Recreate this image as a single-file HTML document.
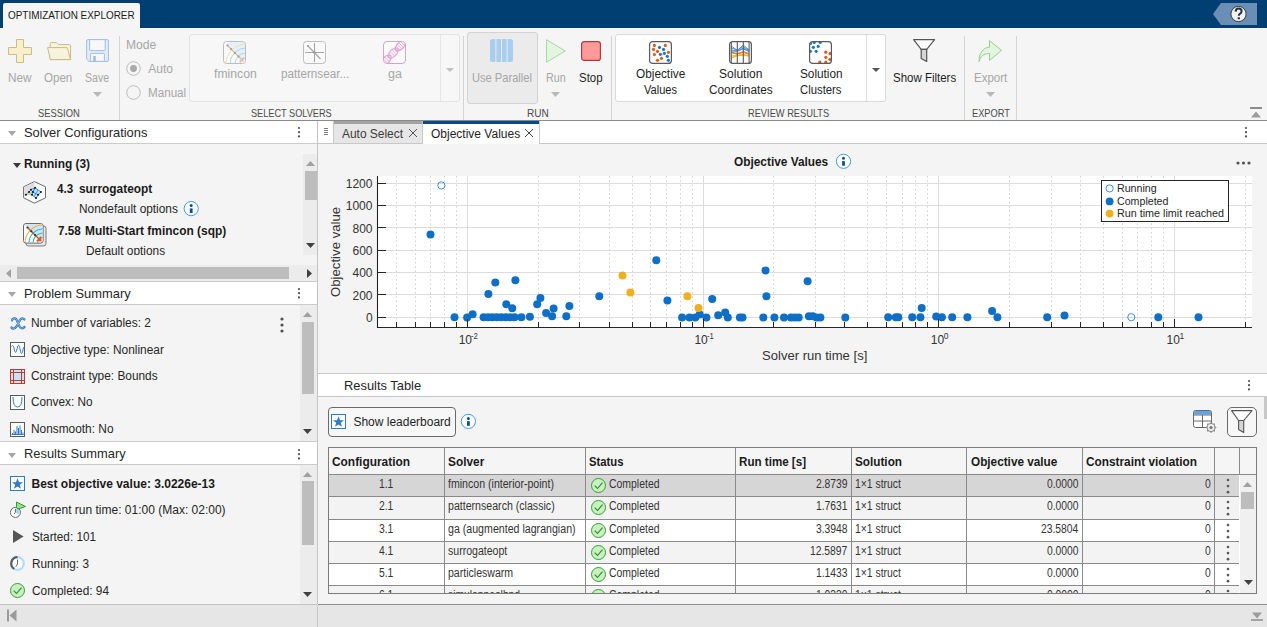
<!DOCTYPE html><html><head><meta charset="utf-8"><style>
*{box-sizing:border-box;margin:0;padding:0}
html,body{width:1267px;height:627px;overflow:hidden;background:#f4f4f4;font-family:"Liberation Sans",sans-serif;color:#212121}
.a{position:absolute}
.t{position:absolute;white-space:nowrap;line-height:1;transform-origin:0 0}
svg{position:absolute;overflow:visible}
</style></head><body><div class="a" style="left:0px;top:0px;width:1267px;height:28px;background:#013f73"></div>
<div class="a" style="left:3px;top:3px;width:137px;height:25px;background:#f5f5f5;border-radius:2px 2px 0 0"></div>
<div class="t" style="left:8.20px;top:9.59px;font-size:11px;color:#1a1a1a;transform:scaleX(0.9019);">OPTIMIZATION EXPLORER</div>
<svg style="left:1213px;top:3px" width="44" height="22" viewBox="0 0 44 22"><path d="M8 0H44V22H8L0 11Z" fill="#6a8eb4"/><circle cx="25.5" cy="11" r="7.6" fill="#f2f2f2" stroke="#24323f" stroke-width="0.9"/><path d="M22.6 8.6 Q22.8 5.6 25.6 5.6 Q28.6 5.6 28.6 8.2 Q28.6 9.8 26.8 10.8 Q25.8 11.4 25.8 12.8" fill="none" stroke="#24323f" stroke-width="2"/><rect x="24.7" y="14.3" width="2.2" height="2" fill="#24323f"/></svg>
<div class="a" style="left:0px;top:28px;width:1267px;height:92px;background:#f5f5f5"></div>
<div class="a" style="left:0px;top:120px;width:1267px;height:1px;background:#8a8a8a"></div>
<div class="a" style="left:119px;top:36px;width:1px;height:84px;background:#d4d4d4"></div>
<div class="a" style="left:463px;top:36px;width:1px;height:84px;background:#d4d4d4"></div>
<div class="a" style="left:611px;top:36px;width:1px;height:84px;background:#d4d4d4"></div>
<div class="a" style="left:964px;top:36px;width:1px;height:84px;background:#d4d4d4"></div>
<div class="a" style="left:1016px;top:36px;width:1px;height:84px;background:#d4d4d4"></div>
<svg style="left:8px;top:39px" width="24" height="24" viewBox="0 0 24 24"><path d="M8.5 0.5h7v8h8v7h-8v8h-7v-8h-8v-7h8z" fill="#f8efcb" stroke="#cdbb8c" stroke-width="1" stroke-linejoin="round"/></svg>
<svg style="left:47px;top:42px" width="25" height="19" viewBox="0 0 25 19"><path d="M3.2 17.6V1.6Q3.2 0.6 4.2 0.6H9.5L11.5 2.6H22.5Q23.6 2.6 23.6 3.6V17.6Z" fill="#f8f4dc" stroke="#c9b98f" stroke-width="1" stroke-linejoin="round"/><path d="M0.6 5.6H20.2L23.6 17.6H3.4Z" fill="#f8f4dc" stroke="#c9b98f" stroke-width="1" stroke-linejoin="round"/></svg>
<svg style="left:86px;top:39px" width="23" height="23" viewBox="0 0 23 23"><path d="M0.6 2Q0.6 0.6 2 0.6H21Q22.4 0.6 22.4 2V21Q22.4 22.4 21 22.4H3L0.6 20Z" fill="#e1edfa" stroke="#9fbde3"/><rect x="3.6" y="0.6" width="15.6" height="11" rx="1" fill="#f7f7f7" stroke="#9fbde3"/><rect x="4.6" y="14.4" width="13.8" height="8" rx="0.8" fill="#f7f7f7" stroke="#9fbde3"/><rect x="7.2" y="17" width="2.6" height="5.6" fill="#9fbde3"/></svg>
<div class="t" style="left:8.30px;top:71.84px;font-size:12px;color:#a6a6a6;transform:scaleX(0.9782);">New</div>
<div class="t" style="left:44.30px;top:71.84px;font-size:12px;color:#a6a6a6;transform:scaleX(0.9634);">Open</div>
<div class="t" style="left:85.30px;top:71.84px;font-size:12px;color:#a6a6a6;transform:scaleX(0.8804);">Save</div>
<svg style="left:93px;top:92px" width="9" height="5" viewBox="0 0 9 5"><path d="M0 0h9L4.5 5z" fill="#b8b8b8"/></svg>
<div class="t" style="left:38.30px;top:107.69px;font-size:11px;color:#4a4a4a;transform:scaleX(0.8532);">SESSION</div>
<div class="t" style="left:126.40px;top:38.84px;font-size:12px;color:#a6a6a6;transform:scaleX(1.0067);">Mode</div>
<svg style="left:126px;top:61px" width="15" height="15" viewBox="0 0 15 15"><circle cx="7.5" cy="7.5" r="6.8" fill="#f5f5f5" stroke="#bcbcbc"/><circle cx="7.5" cy="7.5" r="3.4" fill="#a9a9a9"/></svg>
<div class="t" style="left:148.30px;top:63.04px;font-size:12px;color:#a6a6a6;">Auto</div>
<svg style="left:126px;top:85px" width="15" height="15" viewBox="0 0 15 15"><circle cx="7.5" cy="7.5" r="6.8" fill="#f5f5f5" stroke="#bcbcbc"/></svg>
<div class="t" style="left:148.30px;top:86.54px;font-size:12px;color:#a6a6a6;transform:scaleX(0.9702);">Manual</div>
<div class="a" style="left:189px;top:34px;width:271px;height:68px;background:#f7f7f7;border:1px solid #e2e2e2;border-radius:3px"></div>
<div class="a" style="left:440px;top:35px;width:1px;height:66px;background:#e6e6e6"></div>
<svg style="left:446px;top:68px" width="8" height="4" viewBox="0 0 8 4"><path d="M0 0h8L4.0 4z" fill="#c0c0c0"/></svg>
<svg style="left:223px;top:41px" width="23" height="23" viewBox="0 0 23 23"><defs><clipPath id="cf1"><rect x="1" y="1" width="21" height="21" rx="2.5"/></clipPath></defs><rect x="0.5" y="0.5" width="22" height="22" rx="3" fill="#fafafa" stroke="#bdbdbd"/><g clip-path="url(#cf1)"><path d="M23 23L3 3A21 21 0 0 1 23 3Z" fill="#e6f0fa"/><circle cx="23" cy="23" r="20" fill="none" stroke="#f5dca8" stroke-width="1"/><circle cx="23" cy="23" r="16" fill="none" stroke="#9fd8e8" stroke-width="1"/><circle cx="23" cy="23" r="11" fill="none" stroke="#a8e0c4" stroke-width="1"/><circle cx="23" cy="23" r="6" fill="none" stroke="#a9c8f0" stroke-width="1"/></g><path d="M4.5 4.5L19 19" stroke="#eab79e" stroke-width="1.3"/><path d="M16 20.5L20.5 20.5 20.5 16z" fill="#eab79e"/><circle cx="4.5" cy="4.5" r="1" fill="#9a9a9a"/><circle cx="8" cy="8" r="1" fill="#9a9a9a"/><circle cx="12" cy="12" r="1" fill="#9a9a9a"/><circle cx="15.5" cy="15.5" r="1" fill="#9a9a9a"/></svg>
<div class="t" style="left:213.70px;top:68.24px;font-size:12px;color:#a6a6a6;transform:scaleX(1.0190);">fmincon</div>
<svg style="left:303px;top:41px" width="23" height="23" viewBox="0 0 23 23"><rect x="0.5" y="0.5" width="22" height="22" rx="3" fill="#fafafa" stroke="#bdbdbd"/><path d="M11.5 2V21M2 11.5H21M5 5L17.5 18" stroke="#a6a6a6" stroke-width="1.1"/><circle cx="5" cy="5" r="1.1" fill="#9a9a9a"/><circle cx="11.5" cy="11.5" r="1.3" fill="#9a9a9a"/></svg>
<div class="t" style="left:280.60px;top:68.24px;font-size:12px;color:#a6a6a6;transform:scaleX(0.9729);">patternsear...</div>
<svg style="left:383px;top:41px" width="23" height="23" viewBox="0 0 23 23"><defs><clipPath id="cg1"><rect x="1" y="1" width="21" height="21" rx="3"/></clipPath></defs><rect x="0.5" y="0.5" width="22" height="22" rx="3.5" fill="#fafafa" stroke="#d9a3cb"/><g clip-path="url(#cg1)" fill="none" stroke="#e8a0d4"><ellipse cx="17.3" cy="4.9" rx="6" ry="3.4" transform="rotate(-45 17.3 4.9)" stroke-width="1.3"/><path d="M13.13 5.39L16.81 9.07" stroke-width="0.8"/><path d="M14.68 3.84L18.36 7.52" stroke-width="0.8"/><path d="M16.24 2.28L19.92 5.96" stroke-width="0.8"/><path d="M17.79 0.73L21.47 4.41" stroke-width="0.8"/><ellipse cx="10.2" cy="12" rx="6" ry="3.4" transform="rotate(-45 10.2 12)" stroke-width="1.3"/><path d="M6.03 12.49L9.71 16.17" stroke-width="0.8"/><path d="M7.58 10.94L11.26 14.62" stroke-width="0.8"/><path d="M9.14 9.38L12.82 13.06" stroke-width="0.8"/><path d="M10.69 7.83L14.37 11.51" stroke-width="0.8"/><ellipse cx="3.1" cy="19.1" rx="6" ry="3.4" transform="rotate(-45 3.1 19.1)" stroke-width="1.3"/><path d="M-1.07 19.59L2.61 23.27" stroke-width="0.8"/><path d="M0.48 18.04L4.16 21.72" stroke-width="0.8"/><path d="M2.04 16.48L5.72 20.16" stroke-width="0.8"/><path d="M3.59 14.93L7.27 18.61" stroke-width="0.8"/></g></svg>
<div class="t" style="left:387.50px;top:68.24px;font-size:12px;color:#a6a6a6;transform:scaleX(1.0467);">ga</div>
<div class="t" style="left:251.00px;top:107.69px;font-size:11px;color:#4a4a4a;transform:scaleX(0.8331);">SELECT SOLVERS</div>
<div class="a" style="left:467px;top:32px;width:71px;height:72px;background:#ebebeb;border:1px solid #d3d3d3;border-radius:3px"></div>
<svg style="left:490px;top:39px" width="23" height="23" viewBox="0 0 23 23"><rect x="0" y="0" width="23" height="23" rx="2.5" fill="#a9cdee"/><path d="M5.9 0V23M11.5 0V23M17.1 0V23" stroke="#ebebeb" stroke-width="1"/></svg>
<div class="t" style="left:472.30px;top:71.64px;font-size:12px;color:#a6a6a6;transform:scaleX(0.9266);">Use Parallel</div>
<svg style="left:546px;top:39px" width="20" height="24" viewBox="0 0 20 24"><path d="M0.5 0.8L19.3 12 0.5 23.2z" fill="#e3f5de" stroke="#a8d9a0"/></svg>
<div class="t" style="left:545.50px;top:71.64px;font-size:12px;color:#a6a6a6;transform:scaleX(0.9000);">Run</div>
<svg style="left:551px;top:92px" width="9" height="5" viewBox="0 0 9 5"><path d="M0 0h9L4.5 5z" fill="#b8b8b8"/></svg>
<svg style="left:581px;top:41px" width="20" height="20" viewBox="0 0 20 20"><rect x="0.6" y="0.6" width="18.8" height="18.8" rx="2.5" fill="#ff9a9a" stroke="#b23a3a" stroke-width="1.2"/></svg>
<div class="t" style="left:579.20px;top:71.64px;font-size:12px;color:#1e1e1e;transform:scaleX(0.9543);">Stop</div>
<div class="t" style="left:526.50px;top:107.69px;font-size:11px;color:#4a4a4a;transform:scaleX(0.9131);">RUN</div>
<div class="a" style="left:615px;top:34px;width:271px;height:68px;background:#fff;border:1px solid #d9d9d9;border-radius:3px"></div>
<div class="a" style="left:866px;top:35px;width:1px;height:66px;background:#dcdcdc"></div>
<svg style="left:872px;top:68px" width="8" height="4" viewBox="0 0 8 4"><path d="M0 0h8L4.0 4z" fill="#555"/></svg>
<svg style="left:649px;top:41px" width="23" height="23" viewBox="0 0 23 23"><defs><clipPath id="cd649"><rect x="1" y="1" width="21" height="21" rx="2.5"/></clipPath></defs><rect x="0.5" y="0.5" width="22" height="22" rx="3" fill="#fff"/><g clip-path="url(#cd649)"><circle cx="5.4" cy="4.4" r="1.6" fill="#e15a1d"/><circle cx="16.3" cy="4.4" r="1.6" fill="#e15a1d"/><circle cx="4.5" cy="8.4" r="1.6" fill="#e15a1d"/><circle cx="8.5" cy="10.4" r="1.6" fill="#e15a1d"/><circle cx="5.4" cy="13.5" r="1.6" fill="#e15a1d"/><circle cx="19.4" cy="11.3" r="1.6" fill="#e15a1d"/><circle cx="12.5" cy="17.3" r="1.6" fill="#e15a1d"/><circle cx="8.5" cy="19.3" r="1.6" fill="#e15a1d"/><circle cx="10.5" cy="6.4" r="1.6" fill="#1f77c7"/><circle cx="14.5" cy="8.4" r="1.6" fill="#1f77c7"/><circle cx="11.4" cy="13.3" r="1.6" fill="#1f77c7"/><circle cx="15.4" cy="12.4" r="1.6" fill="#1f77c7"/><circle cx="18.3" cy="15.3" r="1.6" fill="#1f77c7"/><circle cx="19.4" cy="19.3" r="1.6" fill="#1f77c7"/></g><rect x="0.6" y="0.6" width="21.8" height="21.8" rx="3" fill="none" stroke="#5a5a5a" stroke-width="1.2"/></svg>
<div class="t" style="left:636.30px;top:67.64px;font-size:12px;color:#1e1e1e;transform:scaleX(0.9840);">Objective</div>
<div class="t" style="left:644.30px;top:83.64px;font-size:12px;color:#1e1e1e;transform:scaleX(0.9231);">Values</div>
<svg style="left:729px;top:41px" width="23" height="23" viewBox="0 0 23 23"><rect x="0.5" y="0.5" width="22" height="22" rx="3" fill="#fff"/><path d="M2.3 5L8.3 9.5 14.3 4 20.1 9M2.3 7L8.3 9 14.3 5.5 20.1 9.5M2.3 9L8.3 10 14.3 7 20.1 10M2.3 10L8.3 10.3 14.3 8 20.1 10.5" fill="none" stroke="#3b8ad6" stroke-width="0.9"/><path d="M2.3 11L8.3 12.5 14.3 10.5 20.1 12.5M2.3 11.8L8.3 13 14.3 11.5 20.1 13.3" fill="none" stroke="#e8641e" stroke-width="0.9"/><path d="M2.3 15L8.3 14 14.3 13.7 20.1 14.5M2.3 16.5L8.3 14.5 14.3 14.3 20.1 15.2M2.3 17.3L8.3 15 14.3 13.5 20.1 14.8" fill="none" stroke="#f2b21c" stroke-width="0.9"/><path d="M2.3 1V22M8.3 1V22M14.3 1V22M20.1 1V22" stroke="#5a5a5a" stroke-width="1.1"/><rect x="0.6" y="0.6" width="21.8" height="21.8" rx="3" fill="none" stroke="#5a5a5a" stroke-width="1.2"/></svg>
<div class="t" style="left:719.10px;top:67.64px;font-size:12px;color:#1e1e1e;">Solution</div>
<div class="t" style="left:709.00px;top:83.64px;font-size:12px;color:#1e1e1e;transform:scaleX(0.9853);">Coordinates</div>
<svg style="left:809px;top:41px" width="23" height="23" viewBox="0 0 23 23"><defs><clipPath id="cd809"><rect x="1" y="1" width="21" height="21" rx="2.5"/></clipPath></defs><rect x="0.5" y="0.5" width="22" height="22" rx="3" fill="#fff"/><g clip-path="url(#cd809)"><circle cx="1.4" cy="2.5" r="1.6" fill="#1f77c7"/><circle cx="5.2" cy="1.4" r="1.6" fill="#1f77c7"/><circle cx="11.2" cy="1.4" r="1.6" fill="#1f77c7"/><circle cx="4.3" cy="6.3" r="1.6" fill="#1f77c7"/><circle cx="9.2" cy="5.4" r="1.6" fill="#1f77c7"/><circle cx="1.4" cy="10.3" r="1.6" fill="#1f77c7"/><circle cx="7.2" cy="10.3" r="1.6" fill="#1f77c7"/><circle cx="16.8" cy="11.2" r="1.6" fill="#e15a1d"/><circle cx="21" cy="12.7" r="1.6" fill="#e15a1d"/><circle cx="16.8" cy="16.3" r="1.6" fill="#e15a1d"/><circle cx="21" cy="18.3" r="1.6" fill="#e15a1d"/><circle cx="10.8" cy="21" r="1.6" fill="#e15a1d"/><circle cx="16.8" cy="21" r="1.6" fill="#e15a1d"/></g><rect x="0.6" y="0.6" width="21.8" height="21.8" rx="3" fill="none" stroke="#5a5a5a" stroke-width="1.2"/></svg>
<div class="t" style="left:799.50px;top:68.04px;font-size:12px;color:#1e1e1e;transform:scaleX(0.9821);">Solution</div>
<div class="t" style="left:800.30px;top:83.74px;font-size:12px;color:#1e1e1e;transform:scaleX(0.9432);">Clusters</div>
<div class="t" style="left:747.70px;top:107.69px;font-size:11px;color:#4a4a4a;transform:scaleX(0.8425);">REVIEW RESULTS</div>
<svg style="left:913px;top:39px" width="23" height="24" viewBox="0 0 23 24"><path d="M0.6 0.6H21.6L13.7 10.3H8.2Z" fill="#fff" stroke="#555" stroke-width="1.2" stroke-linejoin="round"/><path d="M8.2 10.3H13.7V22.5L8.2 19.5Z" fill="#d6d6d6" stroke="#555" stroke-width="1.2" stroke-linejoin="round"/></svg>
<div class="t" style="left:893.10px;top:71.84px;font-size:12px;color:#1e1e1e;transform:scaleX(0.9561);">Show Filters</div>
<svg style="left:978px;top:39px" width="25" height="24" viewBox="0 0 25 24"><path d="M1.1 22.8C1.1 14 5 8.3 11.5 8.3V1.6L23.5 11.4 11.5 21.5V14.5C6 14.5 2 17 1.1 22.8Z" fill="#e3f5df" stroke="#94d28e" stroke-width="1" stroke-linejoin="round"/></svg>
<div class="t" style="left:973.60px;top:71.84px;font-size:12px;color:#a6a6a6;transform:scaleX(0.9560);">Export</div>
<svg style="left:986px;top:92px" width="9" height="5" viewBox="0 0 9 5"><path d="M0 0h9L4.5 5z" fill="#b8b8b8"/></svg>
<div class="t" style="left:971.70px;top:107.69px;font-size:11px;color:#4a4a4a;transform:scaleX(0.8422);">EXPORT</div>
<svg style="left:1250px;top:107px" width="12" height="12" viewBox="0 0 12 12"><path d="M0 1H12" stroke="#8c8c8c" stroke-width="2"/><path d="M1 10.5L6 4.5 11 10.5z" fill="#9c9c9c"/></svg>
<div class="a" style="left:0px;top:121px;width:317px;height:483px;background:#f4f4f4"></div>
<div class="a" style="left:317px;top:121px;width:1px;height:483px;background:#c4c4c4"></div>
<div class="a" style="left:0px;top:121px;width:317px;height:22px;background:#fff"></div>
<div class="a" style="left:0px;top:143px;width:317px;height:1px;background:#cbcbcb"></div>
<svg style="left:8px;top:131.0px" width="8" height="5" viewBox="0 0 8 5"><path d="M0 0h8L4 5z" fill="#a6a6a6"/></svg>
<div class="t" style="left:24.30px;top:125.50px;font-size:13px;color:#262626;transform:scaleX(0.9932);">Solver Configurations</div>
<svg style="left:297px;top:126.0px" width="4" height="14" viewBox="0 0 4 14"><circle cx="2" cy="2.0" r="1.1" fill="#505050"/><circle cx="2" cy="6.2" r="1.1" fill="#505050"/><circle cx="2" cy="10.4" r="1.1" fill="#505050"/></svg>
<svg style="left:13px;top:163px" width="8" height="5" viewBox="0 0 8 5"><path d="M0 0h8L4 5z" fill="#3a3a3a"/></svg>
<div class="t" style="left:23.50px;top:158.44px;font-size:12px;color:#1a1a1a;font-weight:bold;transform:scaleX(0.9906);">Running (3)</div>
<svg style="left:23px;top:181px" width="23" height="23" viewBox="0 0 23 23"><path d="M11.4 0.6L22.5 5.8V16.8L11.4 22.2 0.6 16.8V5.8Z" fill="#fbfbfb" stroke="#6a6a6a" stroke-width="1"/><path d="M11.4 1.2L1.1 6.1V15L11.4 11Z" fill="#dedede"/><path d="M12.1 6.7L17.9 11 13 17 8.9 13.8Z" fill="#c4e2fb" stroke="#1e88e5" stroke-width="0.9"/><path d="M9.8 11L15 13.8M12.1 6.7L9.8 11 8.9 13.8M15 8.9L11 15.5" stroke="#1e88e5" stroke-width="0.8" fill="none"/><path d="M2.9 13.8L6 11 8 8.7 12.1 6.7" stroke="#1e88e5" stroke-width="0.8" fill="none"/><path d="M3.5 13.8H8.9L9.8 11H6Z" fill="#a9e0f0"/><path d="M4 12.8H9" stroke="#f5d04a" stroke-width="1"/><circle cx="12.1" cy="6.7" r="1.05" fill="#151515"/><circle cx="8" cy="8.7" r="1.05" fill="#151515"/><circle cx="6" cy="11" r="1.05" fill="#151515"/><circle cx="2.9" cy="13.8" r="1.05" fill="#151515"/><circle cx="9.8" cy="11" r="1.05" fill="#151515"/><circle cx="8.9" cy="13.8" r="1.05" fill="#151515"/><circle cx="17.9" cy="11" r="1.05" fill="#151515"/><circle cx="15" cy="13.8" r="1.05" fill="#151515"/><circle cx="13" cy="17" r="1.05" fill="#151515"/></svg>
<div class="t" style="left:57.20px;top:182.54px;font-size:12px;color:#1a1a1a;font-weight:bold;transform:scaleX(0.9684);">4.3</div>
<div class="t" style="left:79.30px;top:182.54px;font-size:12px;color:#1a1a1a;font-weight:bold;transform:scaleX(0.9892);">surrogateopt</div>
<div class="t" style="left:79.30px;top:202.64px;font-size:12px;color:#262626;transform:scaleX(0.9878);">Nondefault options</div>
<svg style="left:183px;top:200px" width="17" height="17" viewBox="0 0 17 17"><circle cx="8.20" cy="8.60" r="7.1" fill="#fff" stroke="#4198e8" stroke-width="1"/><circle cx="8.20" cy="5.60" r="1.5" fill="#0c4aa6"/><rect x="6.80" y="8.40" width="2.8" height="4.6" fill="#0c4aa6"/></svg>
<svg style="left:23px;top:223px" width="24" height="24" viewBox="0 0 24 24"><defs><clipPath id="cl2"><rect x="1" y="1" width="18.6" height="18.6" rx="2"/></clipPath></defs><rect x="3" y="3" width="20" height="20" rx="2.5" fill="#e6e6e6" stroke="#7a7a7a"/><rect x="0.5" y="0.5" width="19.6" height="19.6" rx="2.5" fill="#fff" stroke="#6a6a6a"/><g clip-path="url(#cl2)"><path d="M20 20L2 2A20 20 0 0 1 20 1Z" fill="#cfe6f8"/><circle cx="20" cy="20" r="18" fill="none" stroke="#f5b335" stroke-width="1.1"/><circle cx="20" cy="20" r="14" fill="none" stroke="#2fb3e8" stroke-width="1.1"/><circle cx="20" cy="20" r="10" fill="none" stroke="#3cc08a" stroke-width="1.1"/><circle cx="20" cy="20" r="5.5" fill="none" stroke="#3a8ee8" stroke-width="1.1"/></g><path d="M4.5 4.5L16 16" stroke="#c0502a" stroke-width="1.3"/><path d="M13 18L18.5 18.5 18 13z" fill="#e8541e"/><circle cx="4.5" cy="4.5" r="1.1" fill="#333"/><circle cx="8.3" cy="8.3" r="1.1" fill="#333"/><circle cx="12.1" cy="12.1" r="1.1" fill="#333"/></svg>
<div class="t" style="left:57.50px;top:224.54px;font-size:12px;color:#1a1a1a;font-weight:bold;transform:scaleX(0.9711);">7.58</div>
<div class="t" style="left:85.40px;top:224.54px;font-size:12px;color:#1a1a1a;font-weight:bold;transform:scaleX(0.9944);">Multi-Start fmincon (sqp)</div>
<div class="a" style="left:0;top:240px;width:303px;height:15px;overflow:hidden">
<div class="t" style="left:85.90px;top:4.64px;font-size:12px;color:#262626;transform:scaleX(0.9875);">Default options</div>
</div>
<div class="a" style="left:303px;top:154px;width:14px;height:101px;background:#ececec"></div>
<div class="a" style="left:305px;top:171px;width:12px;height:29px;background:#bdbdbd"></div>
<svg style="left:306px;top:161px" width="9" height="5" viewBox="0 0 9 5"><path d="M0 5h9L4.5 0z" fill="#a0a0a0"/></svg>
<svg style="left:306px;top:243px" width="9" height="5" viewBox="0 0 9 5"><path d="M0 0h9L4.5 5z" fill="#404040"/></svg>
<div class="a" style="left:0px;top:265px;width:317px;height:16px;background:#ececec"></div>
<div class="a" style="left:17px;top:267px;width:272px;height:12px;background:#bdbdbd"></div>
<svg style="left:6px;top:269px" width="5" height="9" viewBox="0 0 5 9"><path d="M5 0v9L0 4.5z" fill="#a0a0a0"/></svg>
<svg style="left:307px;top:269px" width="5" height="9" viewBox="0 0 5 9"><path d="M0 0v9L5 4.5z" fill="#404040"/></svg>
<div class="a" style="left:0px;top:281px;width:317px;height:1px;background:#cbcbcb"></div>
<div class="a" style="left:0px;top:282px;width:317px;height:22px;background:#fff"></div>
<div class="a" style="left:0px;top:304px;width:317px;height:1px;background:#cbcbcb"></div>
<svg style="left:8px;top:292.2px" width="8" height="5" viewBox="0 0 8 5"><path d="M0 0h8L4 5z" fill="#a6a6a6"/></svg>
<div class="t" style="left:24.30px;top:286.70px;font-size:13px;color:#262626;transform:scaleX(0.9905);">Problem Summary</div>
<svg style="left:297px;top:287.2px" width="4" height="14" viewBox="0 0 4 14"><circle cx="2" cy="2.0" r="1.1" fill="#505050"/><circle cx="2" cy="6.2" r="1.1" fill="#505050"/><circle cx="2" cy="10.4" r="1.1" fill="#505050"/></svg>
<div class="a" style="left:300px;top:305px;width:17px;height:136px;background:#ececec"></div>
<div class="a" style="left:302px;top:322px;width:12px;height:72px;background:#bdbdbd"></div>
<svg style="left:303px;top:312px" width="9" height="5" viewBox="0 0 9 5"><path d="M0 5h9L4.5 0z" fill="#a0a0a0"/></svg>
<svg style="left:303px;top:429px" width="9" height="5" viewBox="0 0 9 5"><path d="M0 0h9L4.5 5z" fill="#404040"/></svg>
<svg style="left:279.5px;top:317px" width="4" height="14" viewBox="0 0 4 14"><circle cx="2" cy="2" r="1.6" fill="#505050"/><circle cx="2" cy="8" r="1.6" fill="#505050"/><circle cx="2" cy="14" r="1.6" fill="#505050"/></svg>
<div class="t" style="left:31.40px;top:317.14px;font-size:12px;color:#262626;transform:scaleX(0.9930);">Number of variables: 2</div>
<div class="t" style="left:31.40px;top:344.14px;font-size:12px;color:#262626;transform:scaleX(0.9909);">Objective type: Nonlinear</div>
<div class="t" style="left:31.40px;top:369.64px;font-size:12px;color:#262626;transform:scaleX(0.9889);">Constraint type: Bounds</div>
<div class="t" style="left:31.40px;top:396.24px;font-size:12px;color:#262626;transform:scaleX(0.9817);">Convex: No</div>
<div class="t" style="left:31.40px;top:423.44px;font-size:12px;color:#262626;transform:scaleX(0.9895);">Nonsmooth: No</div>
<svg style="left:10px;top:317px" width="16" height="13" viewBox="0 0 16 13"><path d="M2 3.5C2.5 1 5 0.8 6.5 2.5L9.5 9.5C10.5 11.5 13 12 14.5 10M1.5 10.5C3 12.5 5 11.5 6.5 9.5L10 3C11 1 13 0.8 14.5 2.5" fill="none" stroke="#2e6fc0" stroke-width="2.2" stroke-linecap="round"/><path d="M2 3.5C2.5 1 5 0.8 6.5 2.5L9.5 9.5C10.5 11.5 13 12 14.5 10M1.5 10.5C3 12.5 5 11.5 6.5 9.5L10 3C11 1 13 0.8 14.5 2.5" fill="none" stroke="#9cc8f0" stroke-width="0.8" stroke-linecap="round"/></svg>
<svg style="left:10px;top:342px" width="15" height="15" viewBox="0 0 15 15"><rect x="0.5" y="0.5" width="14" height="14" fill="#fff" stroke="#5a5a5a"/><path d="M1.5 4.5C2.5 3 3.5 3.5 4 6C4.8 10 5.5 12 6.5 9C7.3 6 7.8 2.5 9 3.5C10 5 10.5 11.5 11.5 11.5C12.5 11.5 13 7 13.8 5" fill="none" stroke="#2e79c8" stroke-width="1"/></svg>
<svg style="left:10px;top:369px" width="15" height="15" viewBox="0 0 15 15"><rect x="0.5" y="0.5" width="14" height="14" fill="#c7e3f8" stroke="#c0392b"/><path d="M0 3.5H15M0 11.5H15M3.5 0V15M11.5 0V15" stroke="#c0392b" stroke-width="1"/></svg>
<svg style="left:10px;top:395px" width="15" height="15" viewBox="0 0 15 15"><rect x="0.5" y="0.5" width="14" height="14" fill="#fff" stroke="#5a5a5a"/><path d="M3 2 Q3 12 7.5 12 Q12 12 12 2" fill="none" stroke="#2e79c8" stroke-width="1"/></svg>
<svg style="left:10px;top:422px" width="15" height="15" viewBox="0 0 15 15"><rect x="0.5" y="0.5" width="14" height="14" fill="#fff" stroke="#5a5a5a"/><path d="M1.5 12.5H13.5M2.5 12.5V11M4 12.5V8M5.5 12.5V9.5M7 12.5V4M8.5 12.5V6M10 12.5V3.5M11.5 12.5V8M13 12.5V10.5" fill="none" stroke="#2e79c8" stroke-width="1"/></svg>
<div class="a" style="left:0px;top:441px;width:317px;height:1px;background:#cbcbcb"></div>
<div class="a" style="left:0px;top:442px;width:317px;height:22px;background:#fff"></div>
<div class="a" style="left:0px;top:464px;width:317px;height:1px;background:#cbcbcb"></div>
<svg style="left:8px;top:452.8px" width="8" height="5" viewBox="0 0 8 5"><path d="M0 0h8L4 5z" fill="#a6a6a6"/></svg>
<div class="t" style="left:24.30px;top:447.30px;font-size:13px;color:#262626;transform:scaleX(0.9910);">Results Summary</div>
<svg style="left:297px;top:447.8px" width="4" height="14" viewBox="0 0 4 14"><circle cx="2" cy="2.0" r="1.1" fill="#505050"/><circle cx="2" cy="6.2" r="1.1" fill="#505050"/><circle cx="2" cy="10.4" r="1.1" fill="#505050"/></svg>
<div class="a" style="left:300px;top:465px;width:17px;height:139px;background:#ececec"></div>
<div class="a" style="left:302px;top:481px;width:12px;height:64px;background:#bdbdbd"></div>
<svg style="left:303px;top:472px" width="9" height="5" viewBox="0 0 9 5"><path d="M0 5h9L4.5 0z" fill="#a0a0a0"/></svg>
<svg style="left:303px;top:592px" width="9" height="5" viewBox="0 0 9 5"><path d="M0 0h9L4.5 5z" fill="#404040"/></svg>
<div class="t" style="left:31.50px;top:478.04px;font-size:12px;color:#1a1a1a;font-weight:bold;">Best objective value: 3.0226e-13</div>
<div class="t" style="left:31.50px;top:504.34px;font-size:12px;color:#262626;">Current run time: 01:00 (Max: 02:00)</div>
<div class="t" style="left:31.50px;top:530.84px;font-size:12px;color:#262626;transform:scaleX(0.9790);">Started: 101</div>
<div class="t" style="left:31.50px;top:558.04px;font-size:12px;color:#262626;transform:scaleX(0.9810);">Running: 3</div>
<div class="t" style="left:31.50px;top:585.14px;font-size:12px;color:#262626;transform:scaleX(0.9872);">Completed: 94</div>
<svg style="left:10px;top:476px" width="15" height="15" viewBox="0 0 15 15"><rect x="0.5" y="0.5" width="14" height="14" fill="#fff" stroke="#2e79c8"/><path d="M7.5 2.2L9 6.2 13 6.3 9.8 8.8 11 12.8 7.5 10.4 4 12.8 5.2 8.8 2 6.3 6 6.2z" fill="#2e79c8"/></svg>
<svg style="left:9px;top:501px" width="18" height="18" viewBox="0 0 18 18"><circle cx="6.4" cy="11.4" r="5" fill="#fff" stroke="#666" stroke-width="1"/><path d="M6.4 11.4V6.9A4.5 4.5 0 0 1 10.2 13.8Z" fill="#a8d4f5"/><path d="M6.4 8V11.4L5 13" stroke="#555" stroke-width="0.9" fill="none"/><path d="M7.5 6.5V1L16.5 5.5 9 8Z" fill="#9be08f" stroke="#2e9e2e" stroke-width="1" stroke-linejoin="round"/></svg>
<svg style="left:13px;top:530px" width="11" height="14" viewBox="0 0 11 14"><path d="M0 0L10.6 6.5 0 13z" fill="#555"/></svg>
<svg style="left:10px;top:556px" width="15" height="15" viewBox="0 0 15 15"><circle cx="7.5" cy="7.5" r="6.3" fill="#fff" stroke="#b3dcfb" stroke-width="2.2"/><path d="M7.5 1.2A6.3 6.3 0 0 0 4.3 12.9" fill="none" stroke="#5e5e5e" stroke-width="2.2"/><path d="M7.5 3.5V8L5.7 10.8" stroke="#555" stroke-width="0.9" fill="none"/></svg>
<svg style="left:10px;top:583px" width="15.0" height="15.0" viewBox="0 0 15.0 15.0"><circle cx="7.5" cy="7.5" r="7.0" fill="#c9f0c0" stroke="#34a034" stroke-width="1"/><path d="M3.7 7.7L6.5 10.5L11.5 4.7" fill="none" stroke="#2a8a2a" stroke-width="1.1"/></svg>
<div class="a" style="left:0px;top:604px;width:1267px;height:23px;background:#e6e6e6"></div>
<div class="a" style="left:0px;top:604px;width:317px;height:1px;background:#c4c4c4"></div>
<div class="a" style="left:318px;top:604px;width:949px;height:1px;background:#8e8e8e"></div>
<div class="a" style="left:317px;top:605px;width:1px;height:22px;background:#c8c8c8"></div>
<svg style="left:7px;top:609px" width="10" height="13" viewBox="0 0 10 13"><path d="M1 0.5V12.5" stroke="#9a9a9a" stroke-width="2"/><path d="M9.5 0.5V12.5L2.5 6.5z" fill="#9a9a9a"/></svg>
<svg style="left:1251px;top:612px" width="12" height="9" viewBox="0 0 12 9"><path d="M1 0.5H11L6 6.5z" fill="#9c9c9c"/><path d="M0 8H12" stroke="#9c9c9c" stroke-width="1.8"/></svg>
<div class="a" style="left:318px;top:121px;width:949px;height:22px;background:#fff"></div>
<div class="a" style="left:318px;top:143px;width:949px;height:1px;background:#c8c8c8"></div>
<div class="a" style="left:324px;top:128px;width:4px;height:1px;background:#7a7a7a"></div>
<div class="a" style="left:324px;top:130px;width:4px;height:1px;background:#7a7a7a"></div>
<div class="a" style="left:324px;top:132px;width:4px;height:1px;background:#7a7a7a"></div>
<div class="a" style="left:324px;top:134px;width:4px;height:1px;background:#7a7a7a"></div>
<div class="a" style="left:333px;top:121px;width:1px;height:23px;background:#c8c8c8"></div>
<div class="a" style="left:334px;top:121px;width:89px;height:22px;background:#e6e6e6"></div>
<div class="a" style="left:334px;top:121px;width:89px;height:3px;background:#a3a3a3"></div>
<div class="a" style="left:422px;top:121px;width:1px;height:22px;background:#c8c8c8"></div>
<div class="t" style="left:342.00px;top:127.54px;font-size:12px;color:#3a3a3a;transform:scaleX(0.9939);">Auto Select</div>
<svg style="left:408px;top:128px" width="10" height="10" viewBox="0 0 10 10"><path d="M1 1L9 9M9 1L1 9" stroke="#555" stroke-width="1"/></svg>
<div class="a" style="left:423px;top:121px;width:116px;height:23px;background:#fff"></div>
<div class="a" style="left:423px;top:121px;width:116px;height:3px;background:#0b4a8a"></div>
<div class="a" style="left:539px;top:121px;width:1px;height:22px;background:#c8c8c8"></div>
<div class="t" style="left:431.00px;top:127.54px;font-size:12px;color:#1e1e1e;">Objective Values</div>
<svg style="left:524px;top:128px" width="10" height="10" viewBox="0 0 10 10"><path d="M1 1L9 9M9 1L1 9" stroke="#444" stroke-width="1"/></svg>
<svg style="left:1244px;top:125.5px" width="4" height="14" viewBox="0 0 4 14"><circle cx="2" cy="2.0" r="1.1" fill="#505050"/><circle cx="2" cy="6.2" r="1.1" fill="#505050"/><circle cx="2" cy="10.4" r="1.1" fill="#505050"/></svg>
<div class="a" style="left:318px;top:144px;width:949px;height:229px;background:#f4f4f4"></div>
<div class="t" style="left:733.80px;top:155.84px;font-size:12px;color:#1a1a1a;font-weight:bold;transform:scaleX(0.9877);">Objective Values</div>
<svg style="left:835px;top:153px" width="17" height="17" viewBox="0 0 17 17"><circle cx="8.50" cy="8.30" r="7.1" fill="#fff" stroke="#4198e8" stroke-width="1"/><circle cx="8.50" cy="5.30" r="1.5" fill="#0c4aa6"/><rect x="7.10" y="8.10" width="2.8" height="4.6" fill="#0c4aa6"/></svg>
<svg style="left:1236px;top:160px" width="16" height="6" viewBox="0 0 16 6"><circle cx="2.0" cy="3" r="1.6" fill="#555"/><circle cx="7.5" cy="3" r="1.6" fill="#555"/><circle cx="13.0" cy="3" r="1.6" fill="#555"/></svg>
<div class="a" style="left:318px;top:373px;width:949px;height:1px;background:#c8c8c8"></div>
<div class="a" style="left:377px;top:176px;width:875px;height:151px;background:#fff"></div>
<svg style="left:377px;top:176px" width="875" height="151" viewBox="0 0 875 151"><path d="M19.5 0V151" stroke="#cfcfcf" stroke-width="1" stroke-dasharray="1.5 2.8"/><path d="M38.5 0V151" stroke="#cfcfcf" stroke-width="1" stroke-dasharray="1.5 2.8"/><path d="M53.5 0V151" stroke="#cfcfcf" stroke-width="1" stroke-dasharray="1.5 2.8"/><path d="M67.5 0V151" stroke="#cfcfcf" stroke-width="1" stroke-dasharray="1.5 2.8"/><path d="M79.5 0V151" stroke="#cfcfcf" stroke-width="1" stroke-dasharray="1.5 2.8"/><path d="M161.5 0V151" stroke="#cfcfcf" stroke-width="1" stroke-dasharray="1.5 2.8"/><path d="M202.5 0V151" stroke="#cfcfcf" stroke-width="1" stroke-dasharray="1.5 2.8"/><path d="M232.5 0V151" stroke="#cfcfcf" stroke-width="1" stroke-dasharray="1.5 2.8"/><path d="M255.5 0V151" stroke="#cfcfcf" stroke-width="1" stroke-dasharray="1.5 2.8"/><path d="M273.5 0V151" stroke="#cfcfcf" stroke-width="1" stroke-dasharray="1.5 2.8"/><path d="M289.5 0V151" stroke="#cfcfcf" stroke-width="1" stroke-dasharray="1.5 2.8"/><path d="M303.5 0V151" stroke="#cfcfcf" stroke-width="1" stroke-dasharray="1.5 2.8"/><path d="M315.5 0V151" stroke="#cfcfcf" stroke-width="1" stroke-dasharray="1.5 2.8"/><path d="M396.5 0V151" stroke="#cfcfcf" stroke-width="1" stroke-dasharray="1.5 2.8"/><path d="M438.5 0V151" stroke="#cfcfcf" stroke-width="1" stroke-dasharray="1.5 2.8"/><path d="M467.5 0V151" stroke="#cfcfcf" stroke-width="1" stroke-dasharray="1.5 2.8"/><path d="M490.5 0V151" stroke="#cfcfcf" stroke-width="1" stroke-dasharray="1.5 2.8"/><path d="M509.5 0V151" stroke="#cfcfcf" stroke-width="1" stroke-dasharray="1.5 2.8"/><path d="M525.5 0V151" stroke="#cfcfcf" stroke-width="1" stroke-dasharray="1.5 2.8"/><path d="M538.5 0V151" stroke="#cfcfcf" stroke-width="1" stroke-dasharray="1.5 2.8"/><path d="M550.5 0V151" stroke="#cfcfcf" stroke-width="1" stroke-dasharray="1.5 2.8"/><path d="M632.5 0V151" stroke="#cfcfcf" stroke-width="1" stroke-dasharray="1.5 2.8"/><path d="M674.5 0V151" stroke="#cfcfcf" stroke-width="1" stroke-dasharray="1.5 2.8"/><path d="M703.5 0V151" stroke="#cfcfcf" stroke-width="1" stroke-dasharray="1.5 2.8"/><path d="M726.5 0V151" stroke="#cfcfcf" stroke-width="1" stroke-dasharray="1.5 2.8"/><path d="M745.5 0V151" stroke="#cfcfcf" stroke-width="1" stroke-dasharray="1.5 2.8"/><path d="M760.5 0V151" stroke="#cfcfcf" stroke-width="1" stroke-dasharray="1.5 2.8"/><path d="M774.5 0V151" stroke="#cfcfcf" stroke-width="1" stroke-dasharray="1.5 2.8"/><path d="M786.5 0V151" stroke="#cfcfcf" stroke-width="1" stroke-dasharray="1.5 2.8"/><path d="M868.5 0V151" stroke="#cfcfcf" stroke-width="1" stroke-dasharray="1.5 2.8"/><path d="M90.5 0V151" stroke="#dcdcdc" stroke-width="1"/><path d="M326.5 0V151" stroke="#dcdcdc" stroke-width="1"/><path d="M561.5 0V151" stroke="#dcdcdc" stroke-width="1"/><path d="M797.5 0V151" stroke="#dcdcdc" stroke-width="1"/><path d="M0 141.5H875" stroke="#dcdcdc" stroke-width="1"/><path d="M0 118.5H875" stroke="#dcdcdc" stroke-width="1"/><path d="M0 96.5H875" stroke="#dcdcdc" stroke-width="1"/><path d="M0 74.5H875" stroke="#dcdcdc" stroke-width="1"/><path d="M0 51.5H875" stroke="#dcdcdc" stroke-width="1"/><path d="M0 29.5H875" stroke="#dcdcdc" stroke-width="1"/><path d="M0 7.5H875" stroke="#dcdcdc" stroke-width="1"/></svg>
<svg style="left:377px;top:176px" width="875" height="151"><circle cx="77.5" cy="141.2" r="4.0" fill="#0f6fc6"/><circle cx="90.1" cy="141.5" r="4.0" fill="#0f6fc6"/><circle cx="95.6" cy="138.3" r="4.0" fill="#0f6fc6"/><circle cx="106.6" cy="141.3" r="4.0" fill="#0f6fc6"/><circle cx="111.0" cy="141.3" r="4.0" fill="#0f6fc6"/><circle cx="115.4" cy="141.3" r="4.0" fill="#0f6fc6"/><circle cx="119.8" cy="141.3" r="4.0" fill="#0f6fc6"/><circle cx="124.2" cy="141.3" r="4.0" fill="#0f6fc6"/><circle cx="128.7" cy="141.3" r="4.0" fill="#0f6fc6"/><circle cx="133.0" cy="141.3" r="4.0" fill="#0f6fc6"/><circle cx="137.5" cy="141.3" r="4.0" fill="#0f6fc6"/><circle cx="144.4" cy="141.2" r="4.0" fill="#0f6fc6"/><circle cx="152.9" cy="140.8" r="4.0" fill="#0f6fc6"/><circle cx="111.4" cy="118.1" r="4.0" fill="#0f6fc6"/><circle cx="118.3" cy="106.4" r="4.0" fill="#0f6fc6"/><circle cx="138.4" cy="104.2" r="4.0" fill="#0f6fc6"/><circle cx="129.3" cy="128.2" r="4.0" fill="#0f6fc6"/><circle cx="135.2" cy="132.2" r="4.0" fill="#0f6fc6"/><circle cx="163.4" cy="121.9" r="4.0" fill="#0f6fc6"/><circle cx="160.2" cy="128.2" r="4.0" fill="#0f6fc6"/><circle cx="169.1" cy="137.0" r="4.0" fill="#0f6fc6"/><circle cx="176.6" cy="132.6" r="4.0" fill="#0f6fc6"/><circle cx="175.1" cy="140.2" r="4.0" fill="#0f6fc6"/><circle cx="189.3" cy="140.2" r="4.0" fill="#0f6fc6"/><circle cx="192.4" cy="130.1" r="4.0" fill="#0f6fc6"/><circle cx="222.3" cy="120.2" r="4.0" fill="#0f6fc6"/><circle cx="279.3" cy="84.2" r="4.0" fill="#0f6fc6"/><circle cx="290.4" cy="124.4" r="4.0" fill="#0f6fc6"/><circle cx="335.2" cy="123.1" r="4.0" fill="#0f6fc6"/><circle cx="305.1" cy="141.4" r="4.0" fill="#0f6fc6"/><circle cx="312.5" cy="141.4" r="4.0" fill="#0f6fc6"/><circle cx="318.3" cy="141.4" r="4.0" fill="#0f6fc6"/><circle cx="322.7" cy="138.4" r="4.0" fill="#0f6fc6"/><circle cx="329.4" cy="141.4" r="4.0" fill="#0f6fc6"/><circle cx="341.2" cy="139.3" r="4.0" fill="#0f6fc6"/><circle cx="348.2" cy="136.5" r="4.0" fill="#0f6fc6"/><circle cx="350.8" cy="141.4" r="4.0" fill="#0f6fc6"/><circle cx="362.9" cy="141.4" r="4.0" fill="#0f6fc6"/><circle cx="365.5" cy="141.4" r="4.0" fill="#0f6fc6"/><circle cx="386.3" cy="141.4" r="4.0" fill="#0f6fc6"/><circle cx="388.5" cy="94.4" r="4.0" fill="#0f6fc6"/><circle cx="389.4" cy="120.2" r="4.0" fill="#0f6fc6"/><circle cx="397.4" cy="141.4" r="4.0" fill="#0f6fc6"/><circle cx="407.0" cy="141.4" r="4.0" fill="#0f6fc6"/><circle cx="414.0" cy="141.4" r="4.0" fill="#0f6fc6"/><circle cx="417.9" cy="141.4" r="4.0" fill="#0f6fc6"/><circle cx="421.7" cy="141.4" r="4.0" fill="#0f6fc6"/><circle cx="430.6" cy="105.3" r="4.0" fill="#0f6fc6"/><circle cx="431.9" cy="140.3" r="4.0" fill="#0f6fc6"/><circle cx="435.7" cy="140.3" r="4.0" fill="#0f6fc6"/><circle cx="439.6" cy="141.4" r="4.0" fill="#0f6fc6"/><circle cx="443.4" cy="141.4" r="4.0" fill="#0f6fc6"/><circle cx="468.3" cy="141.4" r="4.0" fill="#0f6fc6"/><circle cx="511.2" cy="141.3" r="4.0" fill="#0f6fc6"/><circle cx="518.8" cy="141.3" r="4.0" fill="#0f6fc6"/><circle cx="521.3" cy="141.3" r="4.0" fill="#0f6fc6"/><circle cx="535.2" cy="141.3" r="4.0" fill="#0f6fc6"/><circle cx="543.4" cy="141.3" r="4.0" fill="#0f6fc6"/><circle cx="544.7" cy="132.0" r="4.0" fill="#0f6fc6"/><circle cx="559.2" cy="140.4" r="4.0" fill="#0f6fc6"/><circle cx="564.9" cy="141.3" r="4.0" fill="#0f6fc6"/><circle cx="575.2" cy="141.3" r="4.0" fill="#0f6fc6"/><circle cx="590.4" cy="141.3" r="4.0" fill="#0f6fc6"/><circle cx="615.1" cy="135.0" r="4.0" fill="#0f6fc6"/><circle cx="620.4" cy="141.3" r="4.0" fill="#0f6fc6"/><circle cx="670.2" cy="141.2" r="4.0" fill="#0f6fc6"/><circle cx="687.5" cy="139.4" r="4.0" fill="#0f6fc6"/><circle cx="781.3" cy="141.2" r="4.0" fill="#0f6fc6"/><circle cx="821.5" cy="141.2" r="4.0" fill="#0f6fc6"/><circle cx="53.5" cy="58.6" r="4.0" fill="#0f6fc6"/><circle cx="245.5" cy="99.5" r="4.0" fill="#edb120"/><circle cx="253.4" cy="116.4" r="4.0" fill="#edb120"/><circle cx="310.4" cy="120.2" r="4.0" fill="#edb120"/><circle cx="321.5" cy="132.1" r="4.0" fill="#edb120"/><circle cx="64.4" cy="9.4" r="3.6" fill="none" stroke="#3c8edb" stroke-width="1"/><circle cx="754.3" cy="141.2" r="3.6" fill="none" stroke="#3c8edb" stroke-width="1"/></svg>
<svg style="left:377px;top:176.0px" width="875" height="153" viewBox="0 0 875 153"><path d="M0.5 0V151.5H875" fill="none" stroke="#262626" stroke-width="1.1"/><path d="M0 141.5H9" stroke="#262626" stroke-width="1"/><path d="M0 118.5H9" stroke="#262626" stroke-width="1"/><path d="M0 96.5H9" stroke="#262626" stroke-width="1"/><path d="M0 74.5H9" stroke="#262626" stroke-width="1"/><path d="M0 51.5H9" stroke="#262626" stroke-width="1"/><path d="M0 29.5H9" stroke="#262626" stroke-width="1"/><path d="M0 7.5H9" stroke="#262626" stroke-width="1"/><path d="M19.5 151V146" stroke="#262626" stroke-width="1"/><path d="M38.5 151V146" stroke="#262626" stroke-width="1"/><path d="M53.5 151V146" stroke="#262626" stroke-width="1"/><path d="M67.5 151V146" stroke="#262626" stroke-width="1"/><path d="M79.5 151V146" stroke="#262626" stroke-width="1"/><path d="M90.5 151V143" stroke="#262626" stroke-width="1"/><path d="M161.5 151V146" stroke="#262626" stroke-width="1"/><path d="M202.5 151V146" stroke="#262626" stroke-width="1"/><path d="M232.5 151V146" stroke="#262626" stroke-width="1"/><path d="M255.5 151V146" stroke="#262626" stroke-width="1"/><path d="M273.5 151V146" stroke="#262626" stroke-width="1"/><path d="M289.5 151V146" stroke="#262626" stroke-width="1"/><path d="M303.5 151V146" stroke="#262626" stroke-width="1"/><path d="M315.5 151V146" stroke="#262626" stroke-width="1"/><path d="M326.5 151V143" stroke="#262626" stroke-width="1"/><path d="M396.5 151V146" stroke="#262626" stroke-width="1"/><path d="M438.5 151V146" stroke="#262626" stroke-width="1"/><path d="M467.5 151V146" stroke="#262626" stroke-width="1"/><path d="M490.5 151V146" stroke="#262626" stroke-width="1"/><path d="M509.5 151V146" stroke="#262626" stroke-width="1"/><path d="M525.5 151V146" stroke="#262626" stroke-width="1"/><path d="M538.5 151V146" stroke="#262626" stroke-width="1"/><path d="M550.5 151V146" stroke="#262626" stroke-width="1"/><path d="M561.5 151V143" stroke="#262626" stroke-width="1"/><path d="M632.5 151V146" stroke="#262626" stroke-width="1"/><path d="M674.5 151V146" stroke="#262626" stroke-width="1"/><path d="M703.5 151V146" stroke="#262626" stroke-width="1"/><path d="M726.5 151V146" stroke="#262626" stroke-width="1"/><path d="M745.5 151V146" stroke="#262626" stroke-width="1"/><path d="M760.5 151V146" stroke="#262626" stroke-width="1"/><path d="M774.5 151V146" stroke="#262626" stroke-width="1"/><path d="M786.5 151V146" stroke="#262626" stroke-width="1"/><path d="M797.5 151V143" stroke="#262626" stroke-width="1"/><path d="M868.5 151V146" stroke="#262626" stroke-width="1"/></svg>
<div class="t" style="left:365.88px;top:312.14px;font-size:12px;color:#333;">0</div>
<div class="t" style="left:352.50px;top:289.81px;font-size:12px;color:#333;">200</div>
<div class="t" style="left:352.50px;top:267.48px;font-size:12px;color:#333;">400</div>
<div class="t" style="left:352.50px;top:245.14px;font-size:12px;color:#333;">600</div>
<div class="t" style="left:352.50px;top:222.81px;font-size:12px;color:#333;">800</div>
<div class="t" style="left:345.75px;top:200.48px;font-size:12px;color:#333;">1000</div>
<div class="t" style="left:345.75px;top:178.14px;font-size:12px;color:#333;">1200</div>
<div class="t" style="left:458.70px;top:334.14px;font-size:12px;color:#333;">10</div>
<div class="t" style="left:471.20px;top:332.00px;font-size:8.5px;color:#333;transform:scaleX(0.9067);">-2</div>
<div class="t" style="left:694.43px;top:334.14px;font-size:12px;color:#333;">10</div>
<div class="t" style="left:706.93px;top:332.00px;font-size:8.5px;color:#333;transform:scaleX(0.9067);">-1</div>
<div class="t" style="left:930.86px;top:334.14px;font-size:12px;color:#333;">10</div>
<div class="t" style="left:943.76px;top:332.00px;font-size:8.5px;color:#333;">0</div>
<div class="t" style="left:1166.59px;top:334.14px;font-size:12px;color:#333;">10</div>
<div class="t" style="left:1179.49px;top:332.00px;font-size:8.5px;color:#333;">1</div>
<div class="t" style="left:762.20px;top:349.00px;font-size:13px;color:#333;transform:scaleX(1.0053);">Solver run time [s]</div>
<div class="t" style="left:328.6px;top:297px;font-size:13.2px;color:#333;transform:rotate(-90deg);transform-origin:0 0;line-height:1">Objective value</div>
<div class="a" style="left:1101px;top:180px;width:128px;height:42px;background:#fff;border:1px solid #262626"></div>
<svg style="left:1101px;top:180px" width="128" height="42" viewBox="0 0 128 42"><circle cx="8.6" cy="8.4" r="3.6" fill="#fff" stroke="#3c8edb" stroke-width="1"/><circle cx="8.6" cy="21.4" r="3.9" fill="#0f6fc6"/><circle cx="8.6" cy="33.6" r="3.9" fill="#edb120"/></svg>
<div class="t" style="left:1117.20px;top:183.49px;font-size:11px;color:#262626;transform:scaleX(0.9683);">Running</div>
<div class="t" style="left:1117.20px;top:195.69px;font-size:11px;color:#262626;transform:scaleX(0.9671);">Completed</div>
<div class="t" style="left:1117.20px;top:208.09px;font-size:11px;color:#262626;transform:scaleX(0.9783);">Run time limit reached</div>
<div class="a" style="left:318px;top:374px;width:949px;height:22px;background:#fff"></div>
<div class="a" style="left:318px;top:396px;width:949px;height:1px;background:#c8c8c8"></div>
<div class="t" style="left:344.30px;top:379.00px;font-size:13px;color:#262626;transform:scaleX(0.9916);">Results Table</div>
<svg style="left:1247px;top:378.5px" width="4" height="14" viewBox="0 0 4 14"><circle cx="2" cy="2.0" r="1.1" fill="#505050"/><circle cx="2" cy="6.2" r="1.1" fill="#505050"/><circle cx="2" cy="10.4" r="1.1" fill="#505050"/></svg>
<div class="a" style="left:318px;top:397px;width:949px;height:207px;background:#f4f4f4"></div>
<div class="a" style="left:1264px;top:397px;width:3px;height:22px;background:#c8c8c8"></div>
<div class="a" style="left:328px;top:407px;width:128px;height:30px;background:#f7f7f7;border:1px solid #6a6a6a;border-radius:4px"></div>
<svg style="left:331px;top:414px" width="15" height="15" viewBox="0 0 15 15"><rect x="0.5" y="0.5" width="14" height="14" fill="#fff" stroke="#2e79c8"/><path d="M7.5 2.2L9 6.2 13 6.3 9.8 8.8 11 12.8 7.5 10.4 4 12.8 5.2 8.8 2 6.3 6 6.2z" fill="#2e79c8"/></svg>
<div class="t" style="left:353.40px;top:415.64px;font-size:12px;color:#1e1e1e;">Show leaderboard</div>
<svg style="left:460px;top:413px" width="17" height="17" viewBox="0 0 17 17"><circle cx="8.40" cy="8.40" r="7.1" fill="#fff" stroke="#4198e8" stroke-width="1"/><circle cx="8.40" cy="5.40" r="1.5" fill="#0c4aa6"/><rect x="7.00" y="8.20" width="2.8" height="4.6" fill="#0c4aa6"/></svg>
<svg style="left:1193px;top:410px" width="25" height="24" viewBox="0 0 25 24"><rect x="0.5" y="0.5" width="18" height="17" rx="2" fill="#fff" stroke="#6a6a6a"/><rect x="1" y="1" width="17" height="3.6" rx="1" fill="#5aa6ec"/><path d="M0.5 5H18.5M0.5 11H18.5M9.5 5V17.5" stroke="#6a6a6a"/><path d="M23.60 17.50 L21.88 19.11 L21.96 21.46 L19.61 21.38 L18.00 23.10 L16.39 21.38 L14.04 21.46 L14.12 19.11 L12.40 17.50 L14.12 15.89 L14.04 13.54 L16.39 13.62 L18.00 11.90 L19.61 13.62 L21.96 13.54 L21.88 15.89Z" fill="#8a8a8a"/><circle cx="18" cy="17.5" r="3.4" fill="#eeeeee"/><circle cx="18" cy="17.5" r="1.6" fill="#777"/></svg>
<div class="a" style="left:1227px;top:407px;width:30px;height:30px;background:#f7f7f7;border:1px solid #6a6a6a;border-radius:5px"></div>
<svg style="left:1231px;top:410px" width="22" height="24" viewBox="0 0 22 24"><path d="M0.6 0.6H21L12.7 10.5H7.6Z" fill="#fff" stroke="#555" stroke-width="1.1" stroke-linejoin="round"/><path d="M7.6 10.5H12.7V22.5L7.6 19.5Z" fill="#d6d6d6" stroke="#555" stroke-width="1.1" stroke-linejoin="round"/></svg>
<div class="a" style="left:328px;top:447px;width:929px;height:147px;background:#fff;border:1px solid #7c7c7c;overflow:hidden">
<div class="a" style="left:0px;top:0px;width:927px;height:26px;background:#f5f5f5"></div>
<div class="a" style="left:0px;top:27px;width:910px;height:21px;background:#d6d6d6"></div>
<div class="a" style="left:0px;top:49px;width:910px;height:22px;background:#f3f3f3"></div>
<div class="a" style="left:0px;top:72px;width:910px;height:21px;background:#fff"></div>
<div class="a" style="left:0px;top:94px;width:910px;height:21px;background:#f3f3f3"></div>
<div class="a" style="left:0px;top:116px;width:910px;height:21px;background:#fff"></div>
<div class="a" style="left:0px;top:138px;width:910px;height:21px;background:#f3f3f3"></div>
<div class="a" style="left:0px;top:26px;width:927px;height:1px;background:#8a8a8a"></div>
<div class="a" style="left:0px;top:48px;width:910px;height:1px;background:#8a8a8a"></div>
<div class="a" style="left:0px;top:71px;width:910px;height:1px;background:#8a8a8a"></div>
<div class="a" style="left:0px;top:93px;width:910px;height:1px;background:#8a8a8a"></div>
<div class="a" style="left:0px;top:115px;width:910px;height:1px;background:#8a8a8a"></div>
<div class="a" style="left:0px;top:137px;width:910px;height:1px;background:#8a8a8a"></div>
<div class="a" style="left:115px;top:0px;width:1px;height:146px;background:#8a8a8a"></div>
<div class="a" style="left:256px;top:0px;width:1px;height:146px;background:#8a8a8a"></div>
<div class="a" style="left:406px;top:0px;width:1px;height:146px;background:#8a8a8a"></div>
<div class="a" style="left:522px;top:0px;width:1px;height:146px;background:#8a8a8a"></div>
<div class="a" style="left:637px;top:0px;width:1px;height:146px;background:#8a8a8a"></div>
<div class="a" style="left:753px;top:0px;width:1px;height:146px;background:#8a8a8a"></div>
<div class="a" style="left:885px;top:0px;width:1px;height:146px;background:#8a8a8a"></div>
<div class="a" style="left:910px;top:0px;width:1px;height:27px;background:#8a8a8a"></div>
<div class="a" style="left:911px;top:27px;width:17px;height:119px;background:#f0f0f0"></div>
<div class="a" style="left:912px;top:44px;width:13px;height:17px;background:#bdbdbd"></div>
<svg style="left:914px;top:33.5px" width="9" height="5" viewBox="0 0 9 5"><path d="M0 5h9L4.5 0z" fill="#a0a0a0"/></svg>
<svg style="left:915px;top:132px" width="9" height="5" viewBox="0 0 9 5"><path d="M0 0h9L4.5 5z" fill="#404040"/></svg>
<div class="t" style="left:3.00px;top:7.54px;font-size:12px;color:#1a1a1a;font-weight:bold;transform:scaleX(0.9921);">Configuration</div>
<div class="t" style="left:119.00px;top:7.54px;font-size:12px;color:#1a1a1a;font-weight:bold;transform:scaleX(0.9884);">Solver</div>
<div class="t" style="left:260.00px;top:7.54px;font-size:12px;color:#1a1a1a;font-weight:bold;transform:scaleX(0.9392);">Status</div>
<div class="t" style="left:410.40px;top:7.54px;font-size:12px;color:#1a1a1a;font-weight:bold;transform:scaleX(0.9672);">Run time [s]</div>
<div class="t" style="left:525.80px;top:7.54px;font-size:12px;color:#1a1a1a;font-weight:bold;transform:scaleX(0.9792);">Solution</div>
<div class="t" style="left:641.60px;top:7.54px;font-size:12px;color:#1a1a1a;font-weight:bold;transform:scaleX(0.9807);">Objective value</div>
<div class="t" style="left:757.00px;top:7.54px;font-size:12px;color:#1a1a1a;font-weight:bold;transform:scaleX(0.9856);">Constraint violation</div>
<div class="t" style="left:50.15px;top:30.34px;font-size:12px;color:#333;transform:scaleX(0.8600);">1.1</div>
<div class="t" style="left:119.20px;top:30.34px;font-size:12px;color:#333;transform:scaleX(0.8825);">fmincon (interior-point)</div>
<svg style="left:262px;top:30.0px" width="15" height="15" viewBox="0 0 15 15"><circle cx="7.5" cy="7.5" r="7" fill="#c9f0c0" stroke="#34a034" stroke-width="1"/><path d="M3.7 7.7L6.5 10.5 11.5 4.7" fill="none" stroke="#2a8a2a" stroke-width="1.1"/></svg>
<div class="t" style="left:280.30px;top:30.34px;font-size:12px;color:#333;transform:scaleX(0.8707);">Completed</div>
<div class="t" style="left:486.69px;top:30.34px;font-size:12px;color:#333;transform:scaleX(0.8600);">2.8739</div>
<div class="t" style="left:526.30px;top:30.34px;font-size:12px;color:#333;transform:scaleX(0.8660);">1&times;1 struct</div>
<div class="t" style="left:717.99px;top:30.34px;font-size:12px;color:#333;transform:scaleX(0.8600);">0.0000</div>
<div class="t" style="left:876.30px;top:30.34px;font-size:12px;color:#333;transform:scaleX(0.8600);">0</div>
<svg style="left:896.5px;top:29.5px" width="4" height="14" viewBox="0 0 4 14"><circle cx="2" cy="2.0" r="1.35" fill="#5a5a5a"/><circle cx="2" cy="8.1" r="1.35" fill="#5a5a5a"/><circle cx="2" cy="14.2" r="1.35" fill="#5a5a5a"/></svg>
<div class="t" style="left:50.15px;top:52.34px;font-size:12px;color:#333;transform:scaleX(0.8600);">2.1</div>
<div class="t" style="left:119.20px;top:52.34px;font-size:12px;color:#333;transform:scaleX(0.8836);">patternsearch (classic)</div>
<svg style="left:262px;top:52.0px" width="15" height="15" viewBox="0 0 15 15"><circle cx="7.5" cy="7.5" r="7" fill="#c9f0c0" stroke="#34a034" stroke-width="1"/><path d="M3.7 7.7L6.5 10.5 11.5 4.7" fill="none" stroke="#2a8a2a" stroke-width="1.1"/></svg>
<div class="t" style="left:280.30px;top:52.34px;font-size:12px;color:#333;transform:scaleX(0.8707);">Completed</div>
<div class="t" style="left:486.69px;top:52.34px;font-size:12px;color:#333;transform:scaleX(0.8600);">1.7631</div>
<div class="t" style="left:526.30px;top:52.34px;font-size:12px;color:#333;transform:scaleX(0.8660);">1&times;1 struct</div>
<div class="t" style="left:717.99px;top:52.34px;font-size:12px;color:#333;transform:scaleX(0.8600);">0.0000</div>
<div class="t" style="left:876.30px;top:52.34px;font-size:12px;color:#333;transform:scaleX(0.8600);">0</div>
<svg style="left:896.5px;top:51.5px" width="4" height="14" viewBox="0 0 4 14"><circle cx="2" cy="2.0" r="1.35" fill="#5a5a5a"/><circle cx="2" cy="8.1" r="1.35" fill="#5a5a5a"/><circle cx="2" cy="14.2" r="1.35" fill="#5a5a5a"/></svg>
<div class="t" style="left:50.15px;top:75.34px;font-size:12px;color:#333;transform:scaleX(0.8600);">3.1</div>
<div class="t" style="left:119.20px;top:75.34px;font-size:12px;color:#333;transform:scaleX(0.8853);">ga (augmented lagrangian)</div>
<svg style="left:262px;top:75.0px" width="15" height="15" viewBox="0 0 15 15"><circle cx="7.5" cy="7.5" r="7" fill="#c9f0c0" stroke="#34a034" stroke-width="1"/><path d="M3.7 7.7L6.5 10.5 11.5 4.7" fill="none" stroke="#2a8a2a" stroke-width="1.1"/></svg>
<div class="t" style="left:280.30px;top:75.34px;font-size:12px;color:#333;transform:scaleX(0.8707);">Completed</div>
<div class="t" style="left:486.69px;top:75.34px;font-size:12px;color:#333;transform:scaleX(0.8600);">3.3948</div>
<div class="t" style="left:526.30px;top:75.34px;font-size:12px;color:#333;transform:scaleX(0.8660);">1&times;1 struct</div>
<div class="t" style="left:712.30px;top:75.34px;font-size:12px;color:#333;transform:scaleX(0.8600);">23.5804</div>
<div class="t" style="left:876.30px;top:75.34px;font-size:12px;color:#333;transform:scaleX(0.8600);">0</div>
<svg style="left:896.5px;top:74.5px" width="4" height="14" viewBox="0 0 4 14"><circle cx="2" cy="2.0" r="1.35" fill="#5a5a5a"/><circle cx="2" cy="8.1" r="1.35" fill="#5a5a5a"/><circle cx="2" cy="14.2" r="1.35" fill="#5a5a5a"/></svg>
<div class="t" style="left:50.15px;top:97.34px;font-size:12px;color:#333;transform:scaleX(0.8600);">4.1</div>
<div class="t" style="left:119.20px;top:97.34px;font-size:12px;color:#333;transform:scaleX(0.8787);">surrogateopt</div>
<svg style="left:262px;top:97.0px" width="15" height="15" viewBox="0 0 15 15"><circle cx="7.5" cy="7.5" r="7" fill="#c9f0c0" stroke="#34a034" stroke-width="1"/><path d="M3.7 7.7L6.5 10.5 11.5 4.7" fill="none" stroke="#2a8a2a" stroke-width="1.1"/></svg>
<div class="t" style="left:280.30px;top:97.34px;font-size:12px;color:#333;transform:scaleX(0.8707);">Completed</div>
<div class="t" style="left:481.00px;top:97.34px;font-size:12px;color:#333;transform:scaleX(0.8600);">12.5897</div>
<div class="t" style="left:526.30px;top:97.34px;font-size:12px;color:#333;transform:scaleX(0.8660);">1&times;1 struct</div>
<div class="t" style="left:717.99px;top:97.34px;font-size:12px;color:#333;transform:scaleX(0.8600);">0.0000</div>
<div class="t" style="left:876.30px;top:97.34px;font-size:12px;color:#333;transform:scaleX(0.8600);">0</div>
<svg style="left:896.5px;top:96.5px" width="4" height="14" viewBox="0 0 4 14"><circle cx="2" cy="2.0" r="1.35" fill="#5a5a5a"/><circle cx="2" cy="8.1" r="1.35" fill="#5a5a5a"/><circle cx="2" cy="14.2" r="1.35" fill="#5a5a5a"/></svg>
<div class="t" style="left:50.15px;top:119.34px;font-size:12px;color:#333;transform:scaleX(0.8600);">5.1</div>
<div class="t" style="left:119.20px;top:119.34px;font-size:12px;color:#333;transform:scaleX(0.8797);">particleswarm</div>
<svg style="left:262px;top:119.0px" width="15" height="15" viewBox="0 0 15 15"><circle cx="7.5" cy="7.5" r="7" fill="#c9f0c0" stroke="#34a034" stroke-width="1"/><path d="M3.7 7.7L6.5 10.5 11.5 4.7" fill="none" stroke="#2a8a2a" stroke-width="1.1"/></svg>
<div class="t" style="left:280.30px;top:119.34px;font-size:12px;color:#333;transform:scaleX(0.8707);">Completed</div>
<div class="t" style="left:486.69px;top:119.34px;font-size:12px;color:#333;transform:scaleX(0.8600);">1.1433</div>
<div class="t" style="left:526.30px;top:119.34px;font-size:12px;color:#333;transform:scaleX(0.8660);">1&times;1 struct</div>
<div class="t" style="left:717.99px;top:119.34px;font-size:12px;color:#333;transform:scaleX(0.8600);">0.0000</div>
<div class="t" style="left:876.30px;top:119.34px;font-size:12px;color:#333;transform:scaleX(0.8600);">0</div>
<svg style="left:896.5px;top:118.5px" width="4" height="14" viewBox="0 0 4 14"><circle cx="2" cy="2.0" r="1.35" fill="#5a5a5a"/><circle cx="2" cy="8.1" r="1.35" fill="#5a5a5a"/><circle cx="2" cy="14.2" r="1.35" fill="#5a5a5a"/></svg>
<div class="t" style="left:50.15px;top:141.34px;font-size:12px;color:#333;transform:scaleX(0.8600);">6.1</div>
<div class="t" style="left:119.20px;top:141.34px;font-size:12px;color:#333;transform:scaleX(0.8571);">simulannealbnd</div>
<svg style="left:262px;top:141.0px" width="15" height="15" viewBox="0 0 15 15"><circle cx="7.5" cy="7.5" r="7" fill="#c9f0c0" stroke="#34a034" stroke-width="1"/><path d="M3.7 7.7L6.5 10.5 11.5 4.7" fill="none" stroke="#2a8a2a" stroke-width="1.1"/></svg>
<div class="t" style="left:280.30px;top:141.34px;font-size:12px;color:#333;transform:scaleX(0.8707);">Completed</div>
<div class="t" style="left:486.69px;top:141.34px;font-size:12px;color:#333;transform:scaleX(0.8600);">1.0330</div>
<div class="t" style="left:526.30px;top:141.34px;font-size:12px;color:#333;transform:scaleX(0.8660);">1&times;1 struct</div>
<div class="t" style="left:717.99px;top:141.34px;font-size:12px;color:#333;transform:scaleX(0.8600);">0.0000</div>
<div class="t" style="left:876.30px;top:141.34px;font-size:12px;color:#333;transform:scaleX(0.8600);">0</div>
<svg style="left:896.5px;top:140.5px" width="4" height="14" viewBox="0 0 4 14"><circle cx="2" cy="2.0" r="1.35" fill="#5a5a5a"/><circle cx="2" cy="8.1" r="1.35" fill="#5a5a5a"/><circle cx="2" cy="14.2" r="1.35" fill="#5a5a5a"/></svg>
</div></body></html>
